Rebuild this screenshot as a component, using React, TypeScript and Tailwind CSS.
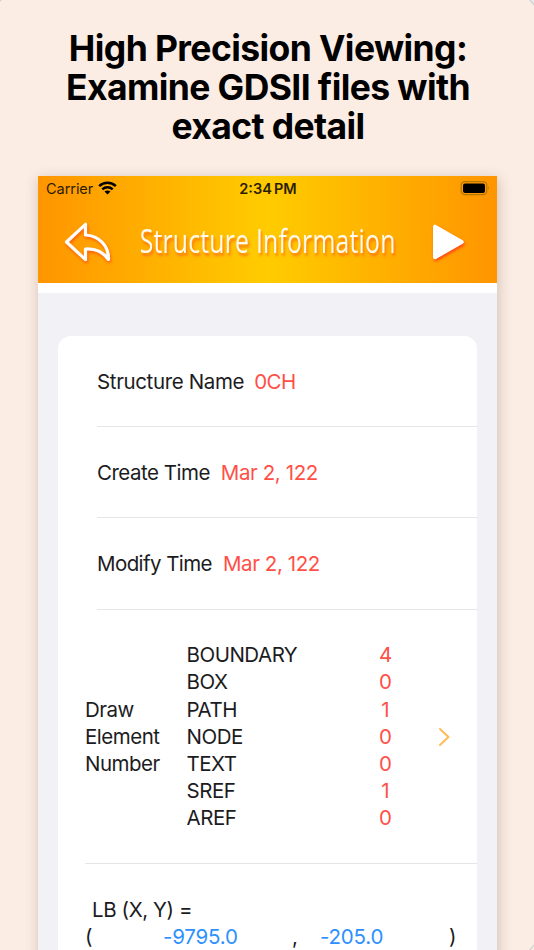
import React from 'react';

interface InfoRowProps {
  label: string;
  value: string;
  labelClass: string;
  valueClass: string;
}

const elements = [
  { name: 'BOUNDARY', count: 4 },
  { name: 'BOX', count: 0 },
  { name: 'PATH', count: 1 },
  { name: 'NODE', count: 0 },
  { name: 'TEXT', count: 0 },
  { name: 'SREF', count: 1 },
  { name: 'AREF', count: 0 },
];

function InfoRow({ label, value, labelClass, valueClass }: InfoRowProps) {
  return (
    <div className="ml-[39px] h-[91.2px] pt-[1.6px] flex items-center border-b-[1.5px] border-[#e6e6e8]">
      <span className={labelClass}>{label}</span>
      <span className={valueClass}>{value}</span>
    </div>
  );
}

function StatusBar() {
  return (
    <div className="h-6 grid grid-cols-3 items-center pl-2 pr-[7px] text-[#2b1d00]">
      <div className="flex items-center gap-[5px]">
        <span className="text-[14.5px] tracking-[-0.05px] pt-px">Carrier</span>
        <svg width="19" height="14" viewBox="0 0 19 14" fill="none" stroke="black" strokeWidth="2.5">
          <path d="M1.2 5.1C5.8 .6 13.2 .6 17.8 5.1" />
          <path d="M4.3 8.3C7.2 5.5 11.8 5.5 14.7 8.3" />
          <path d="M9.5 13.6L6.5 10.6Q9.5 8.4 12.5 10.6Z" fill="black" stroke="none" />
        </svg>
      </div>
      <span className="text-center pt-px text-[14.5px] font-semibold whitespace-nowrap [word-spacing:-1.5px]">2:34 PM</span>
      <svg className="justify-self-end" width="30" height="15" viewBox="0 0 30 15">
        <rect x="1.2" y=".7" width="25.6" height="13" rx="3.6" fill="none" stroke="#b87600" strokeWidth="1.2" />
        <rect x="3" y="2.5" width="22" height="9.4" rx="2" fill="black" />
        <path d="M28 5.2Q29.6 7.2 28 9.4Z" fill="#a76b00" />
      </svg>
    </div>
  );
}

function NavBar() {
  return (
    <div className="flex items-center justify-between h-[83px] pl-[25px] pr-[31px]">
      <svg className="drop-shadow-[1.5px_2.5px_1.5px_rgba(255,70,10,0.75)]" width="50" height="44" viewBox="0 0 50 44" fill="none" stroke="white" strokeWidth="3.2" strokeLinejoin="round">
        <path d="M3.5 22L22.5 4.3V15C36 15.5 46 26 45.5 39.5C39 30.5 31 28.5 22.5 29V39.7Z" />
      </svg>
      <h2 className="w-[256px] flex justify-center -translate-x-[5px] -translate-y-px">
        <span className="text-[33px] tracking-[0.3px] font-normal whitespace-nowrap text-[#fffaf0] scale-x-[0.75] font-['Open_Sans',sans-serif] [text-shadow:2px_3px_3px_rgba(255,90,20,0.7)]">
          Structure Information
        </span>
      </h2>
      <svg className="drop-shadow-[1.5px_2.5px_1.5px_rgba(255,50,20,0.8)]" width="34" height="38" viewBox="0 0 34 38">
        <path d="M3 3.7V34.3L29.7 19Z" fill="white" stroke="white" strokeWidth="4" strokeLinejoin="round" />
      </svg>
    </div>
  );
}

export default function App() {
  return (
    <div className="h-[950px] overflow-hidden bg-[#fbede4] font-['Inter',sans-serif] relative">
      <svg className="absolute inset-0" width="534" height="950" fill="none" stroke="#cbd0d3" strokeWidth="1.2">
        <path d="M0 0H2L0 2ZM529 0H534V5Z" fill="#e8e9ea" stroke="none" />
        <path d="M-1 2L2 -1M529 -1L535 6M529 951L535 944" />
      </svg>

      <h1 className="pt-[29px] pl-[2px] h-[176px] text-center text-[35.5px] leading-[39.2px] font-bold text-black tracking-[-0.6px]">
        High Precision Viewing:
        <br />
        Examine GDSII files with
        <br />
        exact detail
      </h1>

      <div className="relative ml-[38px] w-[459px] h-[800px] bg-[#f2f1f6] shadow-[1px_3px_12px_rgba(90,60,40,0.28)]">
        <div className="h-[107px] bg-[linear-gradient(90deg,#ff9500,#ffcc00_50%,#ff9500)]">
          <StatusBar />
          <NavBar />
        </div>
        <div className="h-2.5 bg-white" />

        <div className="mt-[43px] mx-5 h-[640px] bg-white rounded-t-[13px] text-[20.5px] text-[#1c1c1e]">
          <InfoRow
            label="Structure Name"
            value="0CH"
            labelClass="tracking-[-0.36px]"
            valueClass="ml-2.5 tracking-[-0.6px] text-[#ff4f47]"
          />
          <InfoRow
            label="Create Time"
            value="Mar 2, 122"
            labelClass="tracking-[-0.5px]"
            valueClass="ml-[11px] tracking-[-0.4px] text-[#ff4f47]"
          />
          <InfoRow
            label="Modify Time"
            value="Mar 2, 122"
            labelClass="tracking-[-0.58px]"
            valueClass="ml-[11px] tracking-[-0.4px] text-[#ff4f47]"
          />

          <div className="ml-[27px] h-[254.5px] flex items-center border-b-[1.5px] border-[#e6e6e8] leading-[27.2px]">
            <div className="w-[101.5px] tracking-[-0.5px]">
              Draw
              <br />
              Element
              <br />
              Number
            </div>
            <div className="w-[192px] tracking-[-0.48px]">
              {elements.map((el) => (
                <div key={el.name}>{el.name}</div>
              ))}
            </div>
            <div className="w-[14px] text-center text-[#ff4f47]">
              {elements.map((el) => (
                <div key={el.name}>{el.count}</div>
              ))}
            </div>
            <svg className="ml-[45px] mt-0.5" width="13" height="20" viewBox="0 0 13 20" fill="none" stroke="#ffbd59" strokeWidth="2.1" strokeLinecap="round" strokeLinejoin="round">
              <path d="M2 2L10.5 10L2 18" />
            </svg>
          </div>

          <div className="ml-[27px] pt-[32px] leading-[27.2px]">
            <div className="pl-[7px] tracking-[-0.4px]">LB (X, Y) =</div>
            <div className="flex tracking-[-0.2px]">
              <span className="w-[78px]">(</span>
              <span className="w-[129px] text-[#2e90ff]">-9795.0</span>
              <span className="w-[28px]">,</span>
              <span className="w-[129px] text-[#2e90ff]">-205.0</span>
              <span>)</span>
            </div>
          </div>
        </div>
      </div>
    </div>
  );
}
